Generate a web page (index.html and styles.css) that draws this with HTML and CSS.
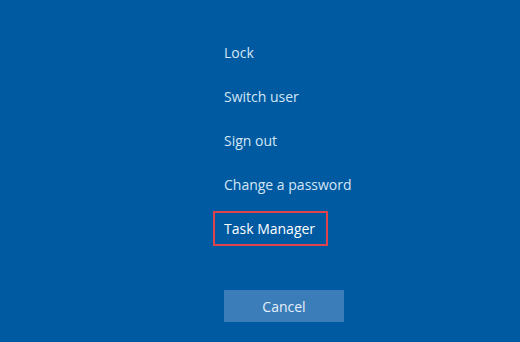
FILE: index.html
```html
<!DOCTYPE html>
<html>
<head>
<meta charset="utf-8">
<link rel="stylesheet" href="styles.css">
</head>
<body>
<div class="screen">
  <ul class="menu">
    <li class="item"><span class="label">Lock</span></li>
    <li class="item"><span class="label">Switch user</span></li>
    <li class="item"><span class="label">Sign out</span></li>
    <li class="item"><span class="label">Change a password</span></li>
    <li class="item"><span class="label focused">Task Manager</span></li>
  </ul>
  <button class="cancel">Cancel</button>
</div>
</body>
</html>
```
FILE: styles.css
```css
html, body {
  margin: 0;
  padding: 0;
  background: #005aa1;
  width: 520px;
  height: 342px;
  overflow: hidden;
}
.screen {
  display: flex;
  flex-direction: column;
  align-items: flex-start;
  padding: 30px 0 0 224px;
  font-family: "Open Sans", "Noto Sans", "Liberation Sans", sans-serif;
}
.menu {
  list-style: none;
  margin: 0;
  padding: 0;
}
.item {
  height: 44px;
  display: flex;
  align-items: center;
}
.label {
  margin-left: -11px;
  padding: 0 11px 0 9px;
  height: 31px;
  line-height: 31px;
  border: 2px solid transparent;
  font-size: 14px;
  color: #d3e6f6;
}
.label.focused {
  border-color: #e0424e;
  color: #ffffff;
}
.cancel {
  margin-top: 40px;
  width: 120px;
  height: 32px;
  border: none;
  background: #3b7db8;
  color: #e4f0fb;
  font-family: "Open Sans", "Noto Sans", "Liberation Sans", sans-serif;
  font-size: 14px;
  padding: 0;
}
```
